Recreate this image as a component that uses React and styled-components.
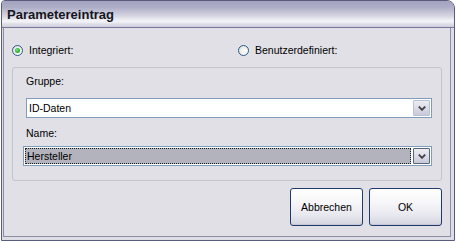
import React from "react";
import styled, { createGlobalStyle } from "styled-components";

const GlobalStyle = createGlobalStyle`
  html, body { margin: 0; padding: 0; background: #ffffff; }
  body { font-family: "Liberation Sans", Arial, sans-serif; }
  * { box-sizing: border-box; }
`;

const Window = styled.div`
  margin-left: 1px;
  width: 454px;
  height: 241px;
  border: 1px solid #5b5b7b;
  border-radius: 4px 8px 0 0;
  background: #dddde6;
  display: flex;
  flex-direction: column;
  overflow: hidden;
`;

const TitleBar = styled.div`
  height: 27px;
  padding: 2px 0 0 5px;
  line-height: 24px;
  font-size: 13px;
  font-weight: bold;
  color: #151520;
  border-bottom: 1px solid #77779a;
  background: linear-gradient(
    to bottom,
    #a3a3bf 0%,
    #aeaec8 25%,
    #d2d2e0 55%,
    #f4f4f8 78%,
    #dcdce6 90%,
    #cfcfdc 100%
  );
`;

const Frame = styled.div`
  flex: 1;
  display: flex;
  padding: 0 3px 3px 1px;
`;

const Client = styled.div`
  flex: 1;
  display: flex;
  flex-direction: column;
  background: #e1e0e6;
  border: 1px solid #8d8da8;
  border-top: none;
  padding: 16px 8px 0 8px;
  font-size: 10.5px;
  color: #000;
`;

const RadioRow = styled.div`
  display: flex;
  align-items: center;
  height: 12px;
`;

const RadioOption = styled.label`
  display: flex;
  align-items: center;
  gap: 6px;
  width: ${(p) => p.$width || "auto"};
  line-height: 13px;
`;

const RadioCircle = styled.span`
  position: relative;
  width: 11px;
  height: 11px;
  border-radius: 50%;
  border: 1px solid #2a5a8c;
  background: radial-gradient(circle at 65% 65%, #ffffff 0%, #f2f2ee 45%, #d6d6d0 100%);
  flex: none;

  &::after {
    content: "";
    display: ${(p) => (p.$checked ? "block" : "none")};
    position: absolute;
    left: 2px;
    top: 2px;
    width: 5px;
    height: 5px;
    border-radius: 50%;
    background: radial-gradient(circle at 40% 40%, #7ee27e 0%, #2fb32f 55%, #178a17 100%);
  }
`;

const GroupBox = styled.div`
  margin-top: 11px;
  border: 1px solid #c4c4cb;
  border-radius: 3px;
  padding: 7px 9px 14px 13px;
  display: flex;
  flex-direction: column;
`;

const FieldLabel = styled.div`
  line-height: 13px;
  margin-top: ${(p) => p.$top || "0px"};
`;

const Combo = styled.div`
  display: flex;
  height: 20px;
  border: 1px solid #7f9db9;
  background: #ffffff;
  margin-top: ${(p) => p.$top || "0px"};
  margin-left: ${(p) => (p.$focused ? "-3px" : "0px")};
`;

const ComboField = styled.div`
  flex: 1;
  display: flex;
  align-items: center;
  line-height: 13px;
  padding-left: ${(p) => (p.$focused ? "1px" : "2px")};
  margin: ${(p) => (p.$focused ? "1px 1px 1px 1px" : "0")};
  background: ${(p) => (p.$focused ? "#b3b3bd" : "#ffffff")};
  border: ${(p) => (p.$focused ? "1px dotted #202020" : "none")};
`;

const ArrowButton = styled.div`
  width: 17px;
  margin: 1px;
  border: 1px solid ${(p) => (p.$focused ? "#55657a" : "#b7c2d6")};
  border-radius: 1px;
  background: linear-gradient(to bottom, #ececf2 0%, #dcdce6 50%, #c8c8d8 100%);
  display: flex;
  align-items: center;
  justify-content: center;
`;

const ButtonRow = styled.div`
  display: flex;
  justify-content: flex-end;
  gap: 6px;
  margin-top: 7px;
`;

const Button = styled.button`
  width: 73px;
  height: 38px;
  border: 1px solid #1d3c6c;
  border-radius: 3px;
  background: linear-gradient(to bottom, #ffffff 0%, #f6f6f8 40%, #e6e6ee 75%, #d4d4e0 100%);
  font-family: "Liberation Sans", Arial, sans-serif;
  font-size: 10.5px;
  color: #000;
  padding: 0;
  box-shadow: inset 0 -1px 0 #c6c6d6;
`;

const Chevron = () => (
  <svg width="8" height="5" viewBox="0 0 8 5">
    <path d="M0.8 0.6 L4 3.8 L7.2 0.6" fill="none" stroke="#3c3c4c" strokeWidth="1.8" />
  </svg>
);

export default function App() {
  return (
    <>
      <GlobalStyle />
      <Window>
        <TitleBar>Parametereintrag</TitleBar>
        <Frame>
          <Client>
            <RadioRow>
              <RadioOption $width="226px">
                <RadioCircle $checked />
                Integriert:
              </RadioOption>
              <RadioOption>
                <RadioCircle />
                Benutzerdefiniert:
              </RadioOption>
            </RadioRow>
            <GroupBox>
              <FieldLabel>Gruppe:</FieldLabel>
              <Combo $top="10px">
                <ComboField>ID-Daten</ComboField>
                <ArrowButton>
                  <Chevron />
                </ArrowButton>
              </Combo>
              <FieldLabel $top="9px">Name:</FieldLabel>
              <Combo $top="6px" $focused>
                <ComboField $focused>Hersteller</ComboField>
                <ArrowButton $focused>
                  <Chevron />
                </ArrowButton>
              </Combo>
            </GroupBox>
            <ButtonRow>
              <Button>Abbrechen</Button>
              <Button>OK</Button>
            </ButtonRow>
          </Client>
        </Frame>
      </Window>
    </>
  );
}
